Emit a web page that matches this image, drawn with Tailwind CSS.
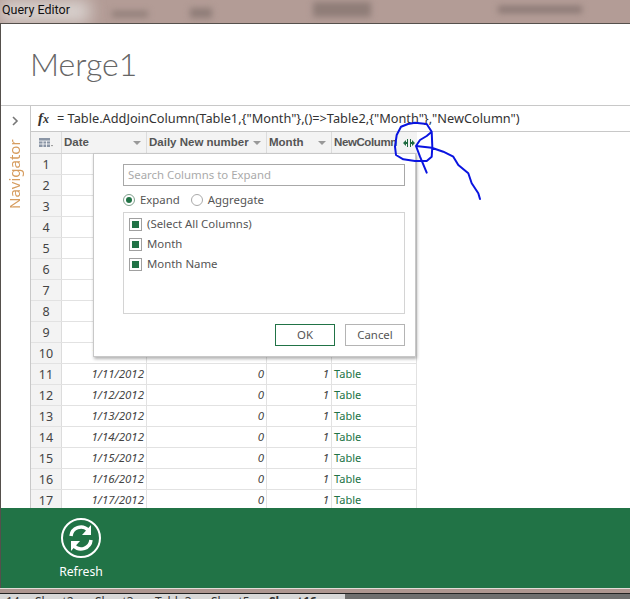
<!DOCTYPE html>
<html lang="en">
<head>
    <meta charset="UTF-8">
    <title>Query Editor</title>
    <script src="https://cdn.jsdelivr.net/npm/@tailwindcss/browser@4"></script>
</head>
<body class="bg-white">
    <div class="relative w-[630px] h-[599px] overflow-hidden flex flex-col font-['Noto_Sans',sans-serif] text-[#444]">
        <!-- window title, over the blurred ribbon of the sheet behind -->
        <div class="relative h-[23px] shrink-0 overflow-hidden bg-[#b39c96]">
            <div class="absolute left-0 top-0 w-[90px] h-[23px] bg-[#d9d2cf] blur-[8px]"></div>
            <div class="absolute left-[112px] top-[11px] w-[36px] h-[6px] bg-[#8f7d78] blur-[3px]"></div>
            <div class="absolute left-[190px] top-[8px] w-[22px] h-[10px] bg-[#8f7d78] blur-[3px]"></div>
            <div class="absolute left-[313px] top-[2px] w-[58px] h-[15px] bg-[#8f7d78] blur-[3px]"></div>
            <div class="absolute left-[498px] top-[6px] w-[84px] h-[7px] bg-[#8a7874] blur-[3px]"></div>
            <div class="relative pl-[2px] text-[12.5px] leading-[20px] text-[#111] font-['Roboto',sans-serif]">Query Editor</div>
        </div>

        <div class="flex-1 min-h-0 flex flex-col border-t border-l border-[#55504c]">
            <div class="h-[82px] shrink-0 pl-[29px] pt-[15px] text-[32px] leading-[50px] font-light text-[#666] border-b border-[#c8c8c8] font-['Lato',sans-serif]">Merge1</div>

            <div class="flex-1 min-h-0 flex">
                <!-- navigator -->
                <div class="w-[30px] shrink-0 border-r border-[#c8c8c8] relative">
                    <svg class="absolute left-[10px] top-[10px]" width="8" height="10" viewBox="0 0 8 10"><path d="M2 1l4 4-4 4" fill="none" stroke="#777" stroke-width="1.6"/></svg>
                    <div class="absolute left-[2px] top-[33px] text-[15px] leading-[22px] text-[#d69c5e] [writing-mode:vertical-rl] rotate-180 h-[70px] text-center">Navigator</div>
                </div>

                <div class="flex-1 min-w-0 flex flex-col">
                    <!-- formula bar -->
                    <div class="h-[26px] shrink-0 flex items-center border-b border-[#c8c8c8] text-[#333]">
                        <span class="w-[26px] pl-[7px] font-['Liberation_Serif',serif] italic font-bold text-[15px]">f<span class="text-[12px]">x</span></span>
                        <span class="text-[12.75px] whitespace-nowrap">= Table.AddJoinColumn(Table1,{"Month"},()=&gt;Table2,{"Month"},"NewColumn")</span>
                    </div>

                    <!-- table -->
                    <div class="w-[386px]">
                        <div class="h-[22px] flex bg-[#f3f3f3] border-b border-[#d4d4d4] text-[11.5px] font-bold text-[#555] font-['Liberation_Sans',sans-serif] whitespace-nowrap">
                            <div class="w-[31px] border-r border-[#dcdcdc] flex items-center justify-center">
                                <svg width="14" height="10" viewBox="0 0 14 10"><path d="M0 0h11v9H0z" fill="#8a95a5"/><path d="M0 3h11M0 6h11M4 3v6M7.500 3v6" stroke="#fff" stroke-width=".8"/><path d="M12 7h2l-1 1.500z" fill="#777"/></svg>
                            </div>
                            <div class="w-[85px] border-r border-[#dcdcdc] flex items-center justify-between pl-[2px] pr-[5px]">Date<span class="w-0 h-0 border-x-[4px] border-x-transparent border-t-[4px] border-t-[#999]"></span></div>
                            <div class="w-[120px] border-r border-[#dcdcdc] flex items-center justify-between pl-[2px] pr-[5px]">Daily New number<span class="w-0 h-0 border-x-[4px] border-x-transparent border-t-[4px] border-t-[#999]"></span></div>
                            <div class="w-[65px] border-r border-[#dcdcdc] flex items-center justify-between pl-[2px] pr-[5px]">Month<span class="w-0 h-0 border-x-[4px] border-x-transparent border-t-[4px] border-t-[#999]"></span></div>
                            <div class="w-[85px] flex items-center pl-[2px]">
                                <span class="tracking-[-0.4px]">NewColumn</span>
                                <svg class="ml-[6px]" width="12" height="8" viewBox="0 0 12 8"><path d="M0 4l3-3v2h1V0h1v8H4V5H3v2zM12 4L9 1v2H8V0H7v8h1V5h1v2z" fill="#1f6b40"/></svg>
                            </div>
                        </div>
                        <div id="rows"></div>
                    </div>
                </div>
            </div>

            <!-- refresh bar -->
            <div class="h-[80px] shrink-0 bg-[#217346] text-white pl-[57px] pt-[9px]">
                <div class="w-[46px] flex flex-col items-center">
                    <svg width="42" height="42" viewBox="0 0 42 42">
                        <circle cx="21" cy="21" r="19" fill="none" stroke="#fff" stroke-width="2"/>
                        <path d="M11 19a10 10 0 0 1 17-6" fill="none" stroke="#fff" stroke-width="3.500"/>
                        <path d="M31 8v10h-9z" fill="#fff"/>
                        <path d="M31 23a10 10 0 0 1-17 6" fill="none" stroke="#fff" stroke-width="3.500"/>
                        <path d="M11 34V24h9z" fill="#fff"/>
                    </svg>
                    <span class="mt-[4px] text-[12.2px] leading-[18px] whitespace-nowrap">Refresh</span>
                </div>
            </div>
        </div>

        <!-- strip of the sheet behind the dialog, its tabs cut off by the window edge -->
        <div class="h-[11px] shrink-0 flex flex-col overflow-hidden">
            <div class="h-[5px] shrink-0 bg-[#ad9690] border-t border-[#e4dcd8]"></div>
            <div class="h-[1px] shrink-0 bg-[#222]"></div>
            <div class="h-[5px] shrink-0 flex bg-[#6e6e6e] overflow-hidden">
                <div class="w-[345px] h-[5px] shrink-0 bg-[#d8d8d8] flex text-[12px] leading-[16px] text-[#333] overflow-hidden whitespace-nowrap">
                    <span class="w-[35px] shrink-0 pl-[6px]">14</span>
                    <span class="w-[60px] shrink-0">Sheet2</span>
                    <span class="w-[60px] shrink-0">Sheet3</span>
                    <span class="w-[56px] shrink-0">Table3</span>
                    <span class="w-[58px] shrink-0">Sheet5</span>
                    <span class="w-[66px] shrink-0 font-bold">Sheet16</span>
                </div>
            </div>
        </div>

        <!-- expand popup -->
        <div class="absolute left-[93px] top-[153px] w-[323px] h-[204px] bg-white border border-[#c8c8c8] shadow-[1px_2px_3px_rgba(0,0,0,0.3)] pl-[29px] pr-[10px] pt-[10px] text-[11.4px] text-[#555]">
            <div class="h-[22px] border border-[#a8a8a8] pl-[4px] leading-[20px] text-[#aaa]">Search Columns to Expand</div>
            <div class="flex items-center h-[20px] mt-[4px]">
                <span class="w-[12px] h-[12px] rounded-full border border-[#7f9f8c] flex items-center justify-center"><span class="w-[6px] h-[6px] rounded-full bg-[#217346]"></span></span>
                <span class="ml-[5px]">Expand</span>
                <span class="ml-[11px] w-[12px] h-[12px] rounded-full border border-[#aaa]"></span>
                <span class="ml-[5px]">Aggregate</span>
            </div>
            <div class="h-[102px] border border-[#d4d4d4] mt-[2px] pl-[5px] pt-[1px]">
                <div class="h-[20px] flex items-center"><span class="w-[13px] h-[13px] border border-[#a0a0a0] flex items-center justify-center"><span class="w-[7px] h-[7px] bg-[#217346]"></span></span><span class="ml-[5px]">(Select All Columns)</span></div>
                <div class="h-[20px] flex items-center"><span class="w-[13px] h-[13px] border border-[#a0a0a0] flex items-center justify-center"><span class="w-[7px] h-[7px] bg-[#217346]"></span></span><span class="ml-[5px]">Month</span></div>
                <div class="h-[20px] flex items-center"><span class="w-[13px] h-[13px] border border-[#a0a0a0] flex items-center justify-center"><span class="w-[7px] h-[7px] bg-[#217346]"></span></span><span class="ml-[5px]">Month Name</span></div>
            </div>
            <div class="flex justify-end gap-[10px] mt-[10px]">
                <div class="w-[60px] h-[22px] border border-[#217346] text-center leading-[20px]">OK</div>
                <div class="w-[60px] h-[22px] border border-[#b4b4b4] text-center leading-[20px]">Cancel</div>
            </div>
        </div>

        <!-- pen annotation -->
        <svg class="absolute inset-0 pointer-events-none" width="630" height="599" viewBox="0 0 630 599">
            <path d="M401 126.700L408 124 415 122.700 426.700 124 431.700 131.700 426.700 136 420 140 416 146 431.700 147.700 443.300 151.700 453.300 156.700 458.300 165 468.300 173.300 471.700 183.300 478.300 193.300 480 199M416 146L420 156.700 426.700 172.700M401 126.700L396.700 135 395 146.700 396 155 403.300 159.300 415 161 426.700 161 431.700 156.700 432.300 146.700 431.700 131.700" fill="none" stroke="#0a14e0" stroke-width="2" stroke-linecap="round" stroke-linejoin="round"/>
        </svg>
    </div>

    <script>
        // row 10 sticks out just below the popup, the rows above it are covered
        const dates = ['', '', '', '', '', '', '', '', '', '1/10/2012', '1/11/2012', '1/12/2012', '1/13/2012', '1/14/2012', '1/15/2012', '1/16/2012', '1/17/2012'];

        document.getElementById('rows').innerHTML = dates.map((date, i) => `
            <div class="h-[21px] flex border-b border-[#e2e2e2] text-[11.5px] text-[#444] overflow-hidden">
                <div class="w-[31px] bg-[#f3f3f3] border-r border-[#dcdcdc] text-center text-[12.5px] leading-[21px]">${i + 1}</div>
                <div class="w-[85px] border-r border-[#e2e2e2] text-right pr-[2px] italic leading-[20px]">${date}</div>
                <div class="w-[120px] border-r border-[#e2e2e2] text-right pr-[2px] italic leading-[20px]">${i > 9 ? 0 : ''}</div>
                <div class="w-[65px] border-r border-[#e2e2e2] text-right pr-[2px] italic leading-[20px]">${i > 9 ? 1 : ''}</div>
                <div class="w-[85px] border-r border-[#e2e2e2] pl-[2px] text-[11px] text-[#217346] leading-[20px]">${i > 9 ? 'Table' : ''}</div>
            </div>
        `).join('');
    </script>
</body>
</html>
